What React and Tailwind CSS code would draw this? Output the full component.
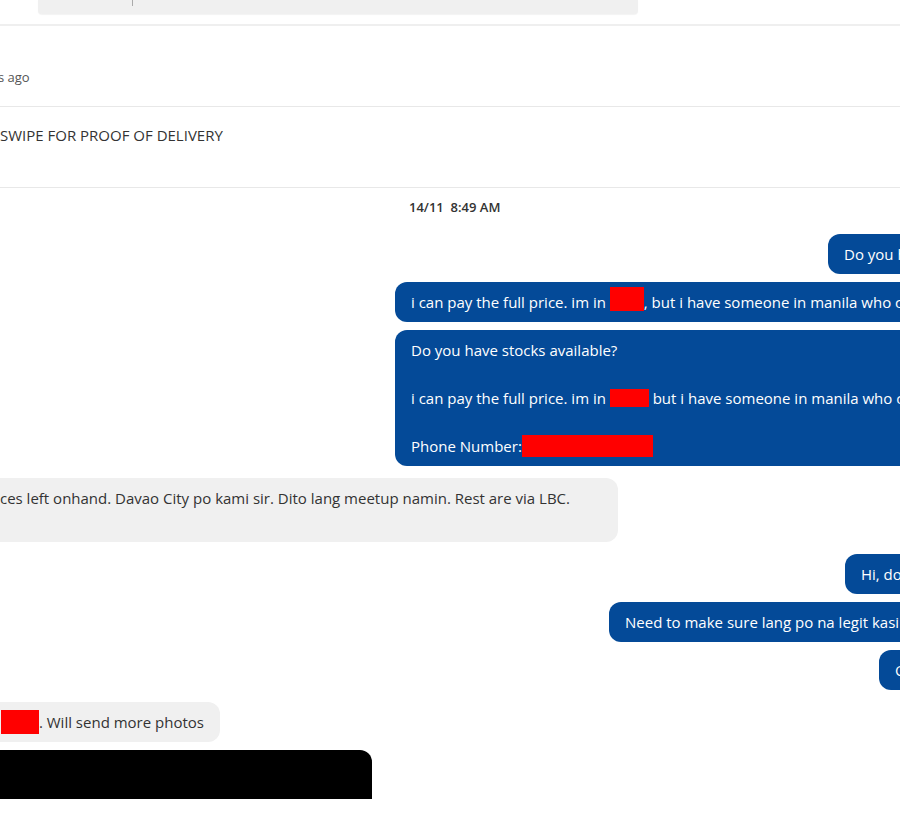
const Redact = ({ className }) => <span className={`relative inline-block bg-[#ff0000] align-top ${className}`} />;

const Sent = ({ left, children, className = "" }) => (
  <div className={`flex ${className}`}>
    <div
      className="shrink-0 whitespace-pre rounded-l-[12px] bg-[#044a98] px-4 py-2 text-[15px] leading-6 text-white"
      style={{ marginLeft: left }}
    >
      {children}
    </div>
  </div>
);

export default function App() {
  return (
    <div className="h-[838px] w-[900px] overflow-hidden bg-white font-['Open_Sans','Noto_Sans',sans-serif] text-[#333]">
      {/* composer strip at top */}
      <div className="h-[24px]">
        <div className="relative ml-[38px] h-[14px] w-[600px] rounded-b-[4px] bg-[#f0f0f0] shadow-[0_1px_1px_rgba(0,0,0,0.05)]">
          <span className="absolute left-[94px] top-0 h-[6px] w-px bg-[#aaa]" />
        </div>
      </div>
      <div className="h-[2px] bg-[#efefef]" />

      <div className="h-[80px] pt-[41px] text-[13px] leading-5 text-[#555]">
        <span className="-ml-[2px]">s ago</span>
      </div>
      <div className="h-px bg-[#e8e8e8]" />

      <div className="h-[80px] pt-[18px] text-[15px] leading-5 text-[#333]">SWIPE FOR PROOF OF DELIVERY</div>
      <div className="h-px bg-[#e8e8e8]" />

      {/* conversation */}
      <div className="h-[611px] overflow-hidden">
        <div className="ml-[409px] mt-[9px] h-5 whitespace-pre text-[13px] font-semibold leading-5 text-[#333]">
          14/11  8:49 AM
        </div>

        <Sent left="828px" className="mt-[17px]">Do you have stocks available?</Sent>
        <Sent left="395px" className="mt-2">
          i can pay the full price. im in <Redact className="-top-[3px] h-[24px] w-[34px]" />, but i have someone in manila who can pick it up
        </Sent>
        <div className="mt-2 flex">
          <div className="ml-[395px] shrink-0 whitespace-pre rounded-l-[12px] bg-[#044a98] px-4 py-2 text-[15px] leading-6 text-white">
            <div>Do you have stocks available?</div>
            <div>&nbsp;</div>
            <div>
              i can pay the full price. im in <Redact className="top-[3px] h-[18px] w-[39px]" /> but i have someone in manila who can pick it up
            </div>
            <div>&nbsp;</div>
            <div>
              Phone Number:<Redact className="top-px h-[22px] w-[131px]" />
            </div>
          </div>
        </div>

        {/* received */}
        <div className="mt-3 flex w-[618px] justify-end">
          <div className="shrink-0 whitespace-pre rounded-r-[12px] bg-[#f0f0f0] py-2 pl-4 pr-[48px] text-[15px] leading-6 text-[#333]">
            <div>We have 2 pieces left onhand. Davao City po kami sir. Dito lang meetup namin. Rest are via LBC.</div>
            <div>&nbsp;</div>
          </div>
        </div>

        <Sent left="845px" className="mt-3">Hi, do you have photos of the actual item?</Sent>
        <Sent left="609px" className="mt-2">Need to make sure lang po na legit kasi malayo po ako</Sent>
        <Sent left="879px" className="mt-2">Ok po salamat</Sent>

        <div className="mt-3 flex w-[220px] justify-end">
          <div className="shrink-0 whitespace-pre rounded-r-[12px] bg-[#f0f0f0] py-2 pl-4 pr-4 text-[15px] leading-6 text-[#333]">
            Sure po, will ship from <Redact className="h-[24px] w-[38px]" />. Will send more photos
          </div>
        </div>

        <div className="mt-2 h-[49px] w-[372px] rounded-tr-[12px] bg-black" />
        <div className="h-px bg-[#e8e8e8]" />
      </div>
    </div>
  );
}
